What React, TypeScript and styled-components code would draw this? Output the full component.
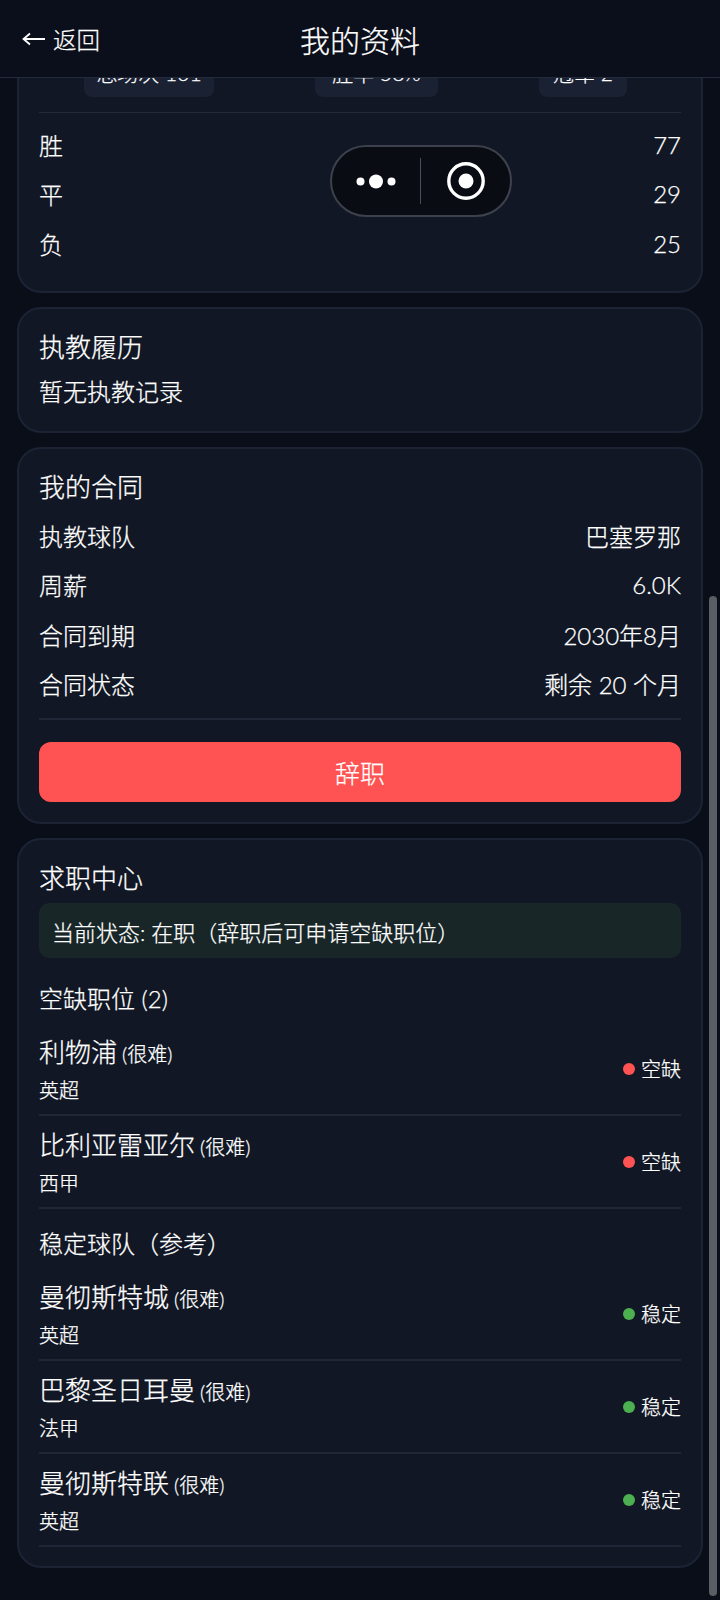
import React from "react";
import styled, { createGlobalStyle } from "styled-components";

const Global = createGlobalStyle`
  html, body { margin: 0; padding: 0; background: #0a0e19; }
  * { box-sizing: border-box; }
`;

const Page = styled.div`
  position: relative;
  width: 720px;
  height: 1600px;
  overflow: hidden;
  background: #0a0e19;
  color: #fff;
  font-family: "Lato", "Noto Sans CJK SC", sans-serif;
  font-weight: 300;
  -webkit-text-stroke: 0.25px #fff;
`;

const Header = styled.header`
  position: absolute;
  top: 0;
  left: 0;
  right: 0;
  height: 78px;
  z-index: 2;
  background: #0b0f1b;
  border-bottom: 1px solid #232a3b;
  display: grid;
  grid-template-columns: 1fr auto 1fr;
  align-items: center;
  padding: 0 22px;
`;

const Back = styled.div`
  display: flex;
  align-items: center;
  gap: 8px;
  font-size: 23.5px;
`;

const Title = styled.h1`
  margin: 0;
  font-size: 30px;
  font-weight: 300;
`;

const Content = styled.main`
  display: flex;
  flex-direction: column;
  gap: 14px;
  padding: 31px 17px 0 17px;
`;

const Card = styled.section`
  background: #111724;
  border: 2px solid #1c2334;
  border-radius: 24px;
  padding: 16px 20px 19px;
`;

const Chips = styled.div`
  display: flex;
  justify-content: space-between;
  padding: 0 54px 15px 45px;
  border-bottom: 1px solid #222a3b;
`;

const Chip = styled.div<{ $width: number }>`
  width: ${(p) => p.$width}px;
  height: 48px;
  border-radius: 8px;
  background: #1a2133;
  font-size: 21px;
  line-height: 48px;
  text-align: center;
`;

const Row = styled.div`
  display: flex;
  justify-content: space-between;
  align-items: center;
  height: 49.3px;
  font-size: 24px;
`;

const Rows = styled.div`
  margin: 7px 0 4px;
`;

const CardTitle = styled.h2`
  margin: 0 0 2px;
  font-size: 26px;
  font-weight: 300;
  line-height: 44px;
`;

const Muted = styled.div`
  margin-top: 3px;
  font-size: 24px;
  line-height: 40px;
`;

const Divider = styled.div`
  height: 2px;
  background: #1e2637;
  margin: 10px 0 22px;
`;

const Danger = styled.button`
  display: block;
  width: 100%;
  height: 60px;
  margin-bottom: 1px;
  border: 0;
  border-radius: 12px;
  background: #ff5252;
  color: #fff;
  font: inherit;
  font-size: 25px;
`;

const Status = styled.div`
  margin: 3px 0 6px;
  height: 55px;
  padding: 0 13px;
  display: flex;
  align-items: center;
  border-radius: 10px;
  background: #182627;
  font-size: 22px;
`;

const Section = styled.div`
  font-size: 24px;
  line-height: 32px;
  padding: 19px 0 8px;
`;

const Team = styled.div`
  display: flex;
  justify-content: space-between;
  align-items: center;
  height: 93px;
  border-bottom: 2px solid #1e2637;
`;

const TeamName = styled.div`
  font-size: 26px;
  line-height: 38px;
`;

const Diff = styled.span`
  font-size: 20px;
  margin-left: 5px;
`;

const League = styled.div`
  font-size: 20px;
  line-height: 30px;
  margin-top: 2px;
`;

const Badge = styled.div`
  display: flex;
  align-items: center;
  gap: 6px;
  font-size: 20px;
`;

const Dot = styled.span<{ $color: string }>`
  width: 12px;
  height: 12px;
  border-radius: 50%;
  background: ${(p) => p.$color};
`;

const Capsule = styled.div`
  position: absolute;
  left: 330px;
  top: 145px;
  width: 182px;
  height: 72px;
  border-radius: 36px;
  background: #0a0c14;
  border: 2px solid #3d414c;
  z-index: 1;
  display: flex;
  align-items: center;
`;

const CapsuleHalf = styled.div<{ $shift?: number }>`
  flex: 1;
  display: flex;
  align-items: center;
  justify-content: center;
  padding-left: ${(p) => p.$shift ?? 0}px;
`;

const CapsuleLine = styled.div`
  width: 1px;
  height: 46px;
  background: #4a4e58;
`;

const ScrollThumb = styled.div`
  position: absolute;
  left: 709px;
  top: 596px;
  width: 8px;
  height: 1000px;
  border-radius: 4px;
  background: #5a5d63;
`;

type TeamItem = { name: string; league: string; open: boolean };

const openTeams: TeamItem[] = [
  { name: "利物浦", league: "英超", open: true },
  { name: "比利亚雷亚尔", league: "西甲", open: true },
];
const stableTeams: TeamItem[] = [
  { name: "曼彻斯特城", league: "英超", open: false },
  { name: "巴黎圣日耳曼", league: "法甲", open: false },
  { name: "曼彻斯特联", league: "英超", open: false },
];

const TeamRow = ({ team }: { team: TeamItem }) => (
  <Team>
    <div>
      <TeamName>
        {team.name}
        <Diff>(很难)</Diff>
      </TeamName>
      <League>{team.league}</League>
    </div>
    <Badge>
      <Dot $color={team.open ? "#ff5252" : "#4caf50"} />
      {team.open ? "空缺" : "稳定"}
    </Badge>
  </Team>
);

export default function App() {
  return (
    <Page>
      <Global />
      <Header>
        <Back>
          <svg width="23" height="14" viewBox="0 0 23 14" fill="none" stroke="#fff" strokeWidth="1.8">
            <path d="M23 7H1.5M8 1.5 1.5 7 8 12.5" />
          </svg>
          返回
        </Back>
        <Title>我的资料</Title>
      </Header>
      <Capsule>
        <CapsuleHalf>
          <svg width="40" height="15" viewBox="0 0 40 15" fill="#fff">
            <circle cx="4.5" cy="7.5" r="4" />
            <circle cx="20" cy="7.5" r="7" />
            <circle cx="35.5" cy="7.5" r="4" />
          </svg>
        </CapsuleHalf>
        <CapsuleLine />
        <CapsuleHalf $shift={2}>
          <svg width="38" height="38" viewBox="0 0 38 38">
            <circle cx="19" cy="19" r="17.2" fill="none" stroke="#fff" strokeWidth="3.4" />
            <circle cx="19" cy="19" r="7.5" fill="#fff" />
          </svg>
        </CapsuleHalf>
      </Capsule>
      <Content>
        <Card>
          <Chips>
            <Chip $width={130}>总场次 131</Chip>
            <Chip $width={123}>胜率 58%</Chip>
            <Chip $width={88}>冠军 2</Chip>
          </Chips>
          <Rows>
            <Row><span>胜</span><span>77</span></Row>
            <Row><span>平</span><span>29</span></Row>
            <Row><span>负</span><span>25</span></Row>
          </Rows>
        </Card>
        <Card>
          <CardTitle>执教履历</CardTitle>
          <Muted>暂无执教记录</Muted>
        </Card>
        <Card>
          <CardTitle>我的合同</CardTitle>
          <Row><span>执教球队</span><span>巴塞罗那</span></Row>
          <Row><span>周薪</span><span>6.0K</span></Row>
          <Row><span>合同到期</span><span>2030年8月</span></Row>
          <Row><span>合同状态</span><span>剩余 20 个月</span></Row>
          <Divider />
          <Danger>辞职</Danger>
        </Card>
        <Card>
          <CardTitle>求职中心</CardTitle>
          <Status>当前状态: 在职（辞职后可申请空缺职位）</Status>
          <Section>空缺职位 (2)</Section>
          {openTeams.map((t) => <TeamRow key={t.name} team={t} />)}
          <Section>稳定球队（参考）</Section>
          {stableTeams.map((t) => <TeamRow key={t.name} team={t} />)}
        </Card>
      </Content>
      <ScrollThumb />
    </Page>
  );
}
